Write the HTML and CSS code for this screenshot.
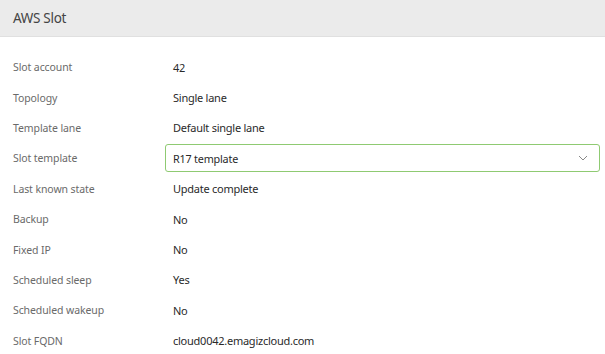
FILE: index.html
```html
<!DOCTYPE html>
<html>
<head>
<meta charset="utf-8">
<link rel="stylesheet" href="styles.css">
</head>
<body>
<div class="panel">
  <div class="panel-header">AWS Slot</div>
  <div class="panel-body">
    <div class="row"><div class="label">Slot account</div><div class="value">42</div></div>
    <div class="row"><div class="label">Topology</div><div class="value">Single lane</div></div>
    <div class="row"><div class="label">Template lane</div><div class="value">Default single lane</div></div>
    <div class="row"><div class="label">Slot template</div>
      <div class="select"><span>R17 template</span>
        <svg class="chev" width="10" height="6" viewBox="0 0 10 6"><path d="M1 1 L5 5 L9 1" fill="none" stroke="#888" stroke-width="1"/></svg>
      </div>
    </div>
    <div class="row"><div class="label">Last known state</div><div class="value">Update complete</div></div>
    <div class="row"><div class="label">Backup</div><div class="value">No</div></div>
    <div class="row"><div class="label">Fixed IP</div><div class="value">No</div></div>
    <div class="row"><div class="label">Scheduled sleep</div><div class="value">Yes</div></div>
    <div class="row"><div class="label">Scheduled wakeup</div><div class="value">No</div></div>
    <div class="row"><div class="label">Slot FQDN</div><div class="value">cloud0042.emagizcloud.com</div></div>
  </div>
</div>
</body>
</html>
```
FILE: styles.css
```css
html, body {
  margin: 0;
  padding: 0;
  background: #fff;
}
body {
  font-family: "Noto Sans", "Open Sans", sans-serif;
  color: #333;
  width: 605px;
  height: 354px;
  overflow: hidden;
}
.panel-header {
  background: #ebebeb;
  border-bottom: 1px solid #e0e0e0;
  height: 37px;
  box-sizing: border-box;
  padding: 0 13px;
  display: flex;
  align-items: center;
  font-size: 13.5px;
  color: #444;
  letter-spacing: -0.3px;
}
.panel-body {
  padding: 15px 5px 0 13px;
  display: grid;
  grid-auto-rows: 30.4px;
}
.row {
  display: grid;
  grid-template-columns: 152px 1fr;
  align-items: center;
}
.label {
  font-size: 10.5px;
  color: #6a6a6a;
  letter-spacing: -0.1px;
}
.value {
  font-size: 11px;
  color: #2a2a2a;
  padding-left: 8px;
  letter-spacing: -0.25px;
}
.select {
  height: 28px;
  box-sizing: border-box;
  border: 1.5px solid #8fca72;
  border-radius: 3px;
  display: flex;
  align-items: center;
  justify-content: space-between;
  padding: 0 11px 0 7px;
  font-size: 10.8px;
  letter-spacing: -0.2px;
  color: #2a2a2a;
}
.chev {
  display: block;
}
```
